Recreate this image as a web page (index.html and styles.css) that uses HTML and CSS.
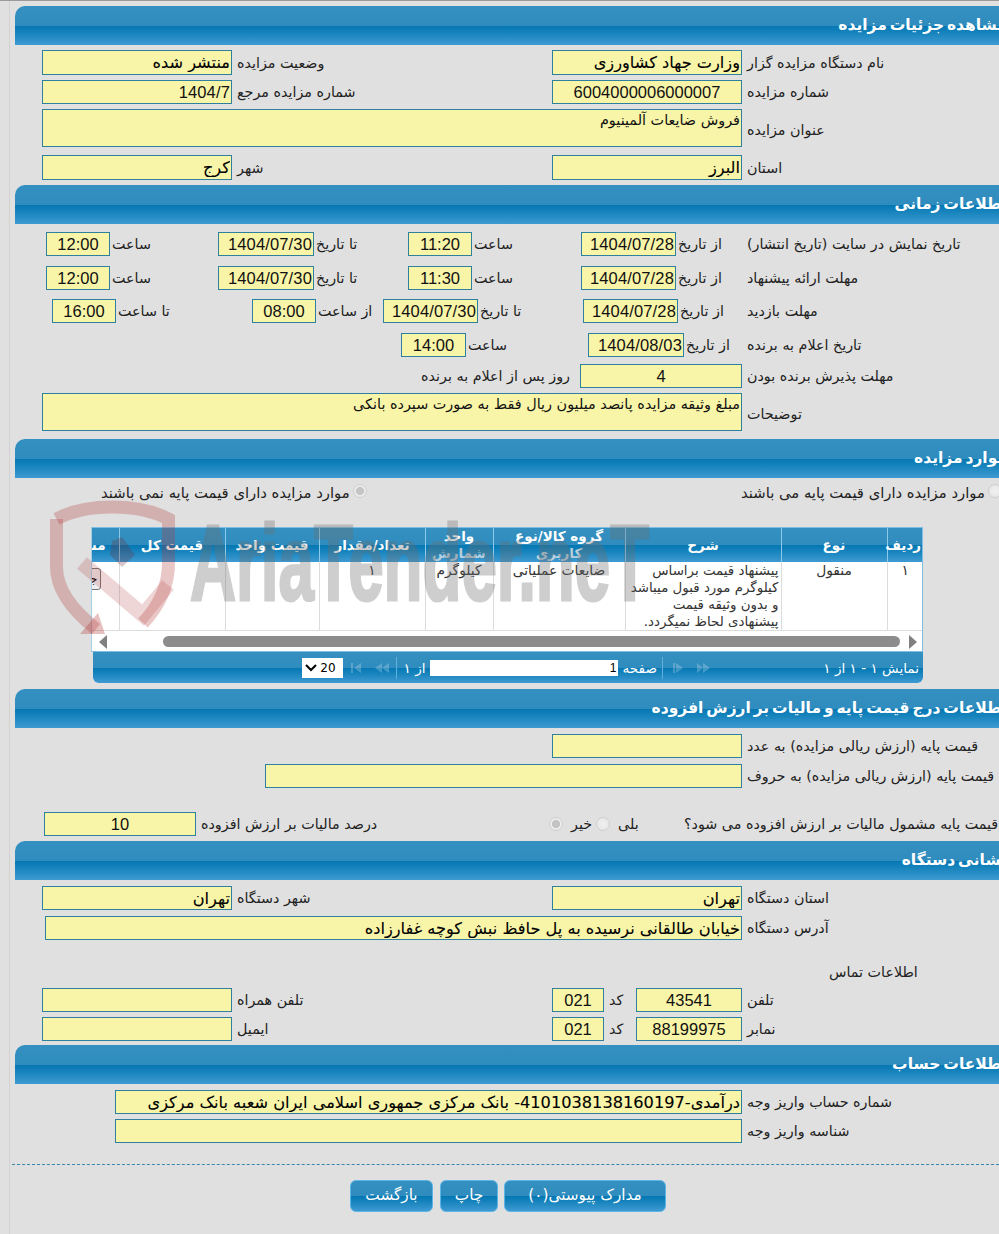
FILE: index.html
```html
<!DOCTYPE html>
<html lang="fa">
<head>
<meta charset="utf-8">
<title>مشاهده جزئیات مزایده</title>
<link rel="stylesheet" href="styles.css">
</head>
<body>
<div class="page">
  <h2 class="bar">مشاهده جزئیات مزایده</h2>
  <div class="row two mt5 h25"><input class="f strong" dir="rtl" readonly value="منتشر شده"><label>وضعیت مزایده</label><input class="f strong" dir="rtl" readonly value="وزارت جهاد کشاورزی"><label>نام دستگاه مزایده گزار</label></div>
  <div class="row two mt5"><input class="f num right" readonly value="1404/7"><label>شماره مزایده مرجع</label><input class="f num center" readonly value="6004000006000007"><label>شماره مزایده</label></div>
  <div class="row wide mt5 h38"><textarea class="f area" dir="rtl" readonly>فروش ضایعات آلمینیوم</textarea><label>عنوان مزایده</label></div>
  <div class="row two mt8 h25"><input class="f strong" dir="rtl" readonly value="کرج"><label>شهر</label><input class="f strong" dir="rtl" readonly value="البرز"><label>استان</label></div>

  <h2 class="bar mt5">اطلاعات زمانی</h2>
  <div class="row t1 mt8"><input class="f num center" readonly value="12:00"><label>ساعت</label><input class="f num right" readonly value="1404/07/30"><label>تا تاریخ</label><input class="f num center" readonly value="11:20"><label>ساعت</label><input class="f num right" readonly value="1404/07/28"><label>از تاریخ</label><label>تاریخ نمایش در سایت (تاریخ انتشار)</label></div>
  <div class="row t1 mt10"><input class="f num center" readonly value="12:00"><label>ساعت</label><input class="f num right" readonly value="1404/07/30"><label>تا تاریخ</label><input class="f num center" readonly value="11:30"><label>ساعت</label><input class="f num right" readonly value="1404/07/28"><label>از تاریخ</label><label>مهلت ارائه پیشنهاد</label></div>
  <div class="row t2 mt9"><input class="f num center" readonly value="16:00"><label>تا ساعت</label><input class="f num center" readonly value="08:00"><label>از ساعت</label><input class="f num right" readonly value="1404/07/30"><label>تا تاریخ</label><input class="f num right" readonly value="1404/07/28"><label>از تاریخ</label><label>مهلت بازدید</label></div>
  <div class="row t3 mt10"><input class="f num center" readonly value="14:00"><label>ساعت</label><input class="f num right" readonly value="1404/08/03"><label>از تاریخ</label><label>تاریخ اعلام به برنده</label></div>
  <div class="row t4 mt7"><label class="after">روز پس از اعلام به برنده</label><input class="f num center" readonly value="4"><label>مهلت پذیرش برنده بودن</label></div>
  <div class="row wide mt5 h38"><textarea class="f area" dir="rtl" readonly>مبلغ وثیقه مزایده پانصد میلیون ریال فقط به صورت سپرده بانکی</textarea><label>توضیحات</label></div>

  <h2 class="bar mt8">موارد مزایده</h2>
  <div class="row radios mt5 h20">
    <span class="opt">موارد مزایده دارای قیمت پایه نمی باشند<input class="radio on" type="radio" name="base" checked disabled></span>
    <span class="opt">موارد مزایده دارای قیمت پایه می باشند<input class="radio" type="radio" name="base" disabled></span>
  </div>

  <div class="grid">
    <table>
      <colgroup><col class="c1"><col class="c2"><col class="c3"><col class="c4"><col class="c5"><col class="c6"><col class="c7"><col class="c8"><col class="c9"></colgroup>
      <thead>
        <tr><th>ردیف</th><th>نوع</th><th>شرح</th><th>گروه کالا/نوع <span class="dim">کاربری</span></th><th>واحد <span class="dim">شمارش</span></th><th>تعداد/مقدار</th><th>قیمت واحد</th><th>قیمت کل</th><th class="cut">مشاهده</th></tr>
      </thead>
      <tbody>
        <tr><td>۱</td><td>منقول</td><td class="desc">پیشنهاد قیمت براساس<br>کیلوگرم مورد قبول میباشد<br>و بدون وثیقه قیمت<br>پیشنهادی لحاظ نمیگردد.</td><td>ضایعات عملیاتی</td><td>کیلوگرم</td><td>۱</td><td></td><td></td><td class="cut"><button class="mini" type="button">جزئیات</button></td></tr>
      </tbody>
    </table>
    <div class="hscroll">
      <svg class="arrow" width="8" height="14" viewBox="0 0 8 14"><path d="M8 0L0 7L8 14Z"/></svg>
      <div class="thumb"></div>
      <svg class="arrow" width="8" height="14" viewBox="0 0 8 14"><path d="M0 0L8 7L0 14Z"/></svg>
    </div>
  </div>
  <div class="pager">
    <span class="status">نمایش ۱ - ۱ از ۱</span>
    <svg class="nav" width="38" height="10" viewBox="0 0 38 10"><path d="M37 0V10H35V0ZM34 0V10L27 5ZM13 0V10L7 5ZM7 0V10L0 5Z" transform="matrix(-1 0 0 1 38 0)"/></svg>
    <i class="sep sep1"></i>
    <span class="lbl">صفحه</span>
    <input class="pageno" dir="rtl" readonly value="1">
    <span class="lbl">از ۱</span>
    <i class="sep sep2"></i>
    <svg class="nav" width="38" height="10" viewBox="0 0 38 10"><path d="M0 0V10H2V0ZM3 5L10 0V10ZM24 5L31 0V10ZM31 5L38 0V10Z"/></svg>
    <span class="select"><b>20</b><svg width="12" height="8" viewBox="0 0 12 8"><path d="M1 1L6 6L11 1" fill="none" stroke="#000" stroke-width="2"/></svg></span>
  </div>

  <h2 class="bar mt6">اطلاعات درج قیمت پایه و مالیات بر ارزش افزوده</h2>
  <div class="row one mt6"><input class="f" dir="rtl" readonly><label>قیمت پایه (ارزش ریالی مزایده) به عدد</label></div>
  <div class="row words mt6"><input class="f" dir="rtl" readonly><label>قیمت پایه (ارزش ریالی مزایده) به حروف</label></div>
  <div class="row tax mt24">
    <input class="f num center" readonly value="10"><label>درصد مالیات بر ارزش افزوده</label>
    <input class="radio on" type="radio" name="vat" checked disabled><label class="tiny">خیر</label>
    <input class="radio" type="radio" name="vat" disabled><label class="tiny">بلی</label>
    <label class="q">قیمت پایه مشمول مالیات بر ارزش افزوده می شود؟</label>
  </div>

  <h2 class="bar mt5">نشانی دستگاه</h2>
  <div class="row two mt6"><input class="f strong" dir="rtl" readonly value="تهران"><label>شهر دستگاه</label><input class="f strong" dir="rtl" readonly value="تهران"><label>استان دستگاه</label></div>
  <div class="row addr mt6"><input class="f strong" dir="rtl" readonly value="خیابان طالقانی نرسیده به پل حافظ نبش کوچه غفارزاده"><label>آدرس دستگاه</label></div>
  <div class="row contact mt22 h20"><label>اطلاعات تماس</label></div>
  <div class="row four mt6"><input class="f" dir="rtl" readonly><label>تلفن همراه</label><input class="f num center" readonly value="021"><label>کد</label><input class="f num center" readonly value="43541"><label>تلفن</label></div>
  <div class="row four mt5"><input class="f" dir="rtl" readonly><label>ایمیل</label><input class="f num center" readonly value="021"><label>کد</label><input class="f num center" readonly value="88199975"><label>نمابر</label></div>

  <h2 class="bar mt4">اطلاعات حساب</h2>
  <div class="row acct mt6"><input class="f strong" dir="rtl" readonly value="درآمدی-4101038138160197- بانک مرکزی جمهوری اسلامی ایران شعبه بانک مرکزی"><label>شماره حساب واریز وجه</label></div>
  <div class="row acct mt5"><input class="f" dir="rtl" readonly><label>شناسه واریز وجه</label></div>
  <div class="dash"></div>
  <div class="actions">
    <button class="btn back" type="button">بازگشت</button>
    <button class="btn print" type="button">چاپ</button>
    <button class="btn docs" type="button">مدارک پیوستی(۰)</button>
  </div>

  <div class="wm" aria-hidden="true">
    <svg class="shield" width="130" height="145" viewBox="0 0 130 145">
      <path d="M6.500 24C25 14 45 12 62 12C80 12 100 14 118.500 24V68C118.500 92 108 112 93 128" fill="none" stroke="#b03030" stroke-opacity=".27" stroke-width="13"/>
      <path d="M6.500 24V72C6.500 95 22 115 46 134" fill="none" stroke="#b03030" stroke-opacity=".27" stroke-width="13"/>
      <path d="M32 68L93 120L118 90" fill="none" stroke="#b03030" stroke-opacity=".2" stroke-width="15"/>
      <path d="M62 46L72 42L85 60L72 72L60 60Z" fill="#70303a" fill-opacity=".28"/>
      <path d="M30 139H55L48 118Z" fill="#b03030" fill-opacity=".3"/>
    </svg>
    <span class="wmtext">AriaTender.neT</span>
  </div>
</div>
</body>
</html>
```
FILE: styles.css
```css
html, body { margin: 0; padding: 0; }
html { overflow: hidden; }
body {
  width: 999px;
  height: 1234px;
  overflow: hidden;
  background: #e0e0e0;
  font-family: "DejaVu Sans", "Liberation Sans", sans-serif;
  font-size: 14.3px;
  color: #222;
}
.page {
  position: relative;
  width: 999px;
  height: 1234px;
  box-sizing: border-box;
  padding-top: 5px;
  border-top: 1px solid #9a9a9a;
  overflow: hidden;
}
.page::before {
  content: "";
  position: absolute;
  left: 9px;
  top: 0;
  bottom: 0;
  width: 1px;
  background: #d2d2d2;
}
.bar {
  margin: 0 -8px 0 15px;
  height: 39px;
  box-sizing: border-box;
  padding: 11px 0 0 0;
  border-top-left-radius: 10px;
  background: linear-gradient(to bottom, #3490c0 0, #2f8cbe 50%, #0577b3 51%, #1884bd 70%, #3f9ad2 100%);
  color: #fff;
  font-size: 15.5px;
  word-spacing: -2.5px;
  line-height: 17px;
  font-weight: bold;
  direction: rtl;
  text-align: right;
}
.mt4 { margin-top: 4px; } .mt5 { margin-top: 5px; } .mt6 { margin-top: 6px; }
.mt7 { margin-top: 7px; } .mt8 { margin-top: 8px; } .mt9 { margin-top: 9px; }
.mt10 { margin-top: 10px; } .mt22 { margin-top: 22px; } .mt24 { margin-top: 24px; }

.row {
  display: grid;
  height: 24px;
  align-items: center;
  direction: ltr;
}
.h25 { height: 25px; } .h38 { height: 38px; } .h20 { height: 20px; }
.row > label {
  direction: rtl;
  text-align: left;
  white-space: nowrap;
  padding-left: 5px;
  line-height: 20px;
}
.f {
  box-sizing: border-box;
  width: 100%;
  height: 100%;
  margin: 0;
  padding: 0 1px;
  border: 1px solid #2f7f9e;
  border-radius: 0;
  outline: none;
  background: #f8f5a8;
  color: #111;
  font-family: "DejaVu Sans", sans-serif;
  font-size: 14.4px;
  resize: none;
  overflow: hidden;
}
.strong { font-size: 16.2px; color: #000; -webkit-text-stroke: .1px #000; }
.num { font-family: "Liberation Sans", sans-serif; font-size: 16.5px; }
.center { text-align: center; }
.right { text-align: right; letter-spacing: .15px; }
.area { line-height: 18px; padding-top: 1px; }

.two { padding-left: 42px; grid-template-columns: 190px 320px 190px 1fr; }
.wide { padding-left: 42px; grid-template-columns: 700px 1fr; }
.wide > label { padding-top: 4px; }
.one { padding-left: 552px; grid-template-columns: 190px 1fr; }
.words { padding-left: 265px; grid-template-columns: 477px 1fr; }
.addr { padding-left: 45px; grid-template-columns: 697px 1fr; }
.acct { padding-left: 115px; grid-template-columns: 627px 1fr; }
.four { padding-left: 42px; grid-template-columns: 190px 320px 52px 32px 106px 1fr; }
.t1 { padding-left: 46px; grid-template-columns: 64px 108px 96px 94px 64px 109px 95px 71px 1fr; }
.t2 { padding-left: 52px; grid-template-columns: 64px 136px 64px 67px 95px 105px 95px 69px 1fr; }
.t3 { padding-left: 401px; grid-template-columns: 65px 122px 96px 63px 1fr; }
.t4 { padding-left: 300px; grid-template-columns: 280px 162px 1fr; }
.t4 > .after { text-align: right; padding: 0 10px 0 0; }
.t1 > label, .t2 > label, .t3 > label { padding-left: 2px; }
.t1 > label:last-child, .t2 > label:last-child, .t3 > label:last-child { padding-left: 0; }

.radios { grid-template-columns: 370px 1fr; padding-left: 0; align-items: start; font-size: 14.8px; }
.opt {
  display: flex;
  align-items: center;
  gap: 3px;
  direction: ltr;
  white-space: nowrap;
  justify-content: flex-start;
  line-height: 20px;
}
.opt:first-child { padding-left: 101px; }
.opt:last-child { padding-left: 371px; }
.radio {
  appearance: none;
  -webkit-appearance: none;
  flex: none;
  width: 14px;
  height: 14px;
  margin: 0;
  border-radius: 50%;
  border: 1px solid #cfcfcf;
  background: radial-gradient(circle, #f0f0f0 0, #e4e4e4 100%);
}
.radio.on { background: radial-gradient(circle, #c4c4c4 0, #c4c4c4 45%, #eaeaea 50%, #eaeaea 100%); }
.opt .radio { margin-top: -4px; }

.grid {
  margin: 24px 0 0 91px;
  width: 832px;
  height: 125px;
  box-sizing: border-box;
  background: #fff;
  border: 1px solid #7fbde2;
  border-left-color: #a9cfe6;
  overflow: hidden;
}
table {
  width: 831px;
  table-layout: fixed;
  border-collapse: collapse;
  direction: rtl;
}
.c1 { width: 36px; } .c2 { width: 106px; } .c3 { width: 156px; } .c4 { width: 132px; }
.c5 { width: 68px; } .c6 { width: 106px; } .c7 { width: 94px; } .c8 { width: 106px; } .c9 { width: 27px; }
th {
  height: 33px;
  padding: 0 2px;
  background: linear-gradient(to bottom, #3490c0 0, #2f8cbe 50%, #0577b3 51%, #1884bd 70%, #3f9ad2 100%);
  color: #fff;
  font-size: 13.5px;
  line-height: 17px;
  font-weight: bold;
  border-left: 1px solid #8ccaea;
  text-align: center;
}
.dim { color: #b9cfdc; display: block; }
td {
  height: 68px;
  padding: 0 4px;
  vertical-align: top;
  text-align: center;
  font-size: 13.8px;
  line-height: 17px;
  color: #333;
  border-left: 1px solid #dcdcdc;
  border-bottom: 1px solid #dcdcdc;
  box-sizing: border-box;
}
td.desc { text-align: right; padding: 0 2px 0 0; white-space: nowrap; font-size: 13.4px; }
.cut { white-space: nowrap; overflow: hidden; text-align: right; padding-right: 0; border-left: none; }
th.cut { padding-right: 13px; }
td.cut { padding-right: 18px; padding-top: 6px; }
.mini {
  width: 50px;
  height: 22px;
  padding: 0 2px;
  margin: 0;
  font: 12px "DejaVu Sans", sans-serif;
  background: #efefef;
  border: 1px solid #767676;
  border-radius: 3px;
  text-align: right;
}
.hscroll {
  display: flex;
  align-items: center;
  height: 21px;
  padding: 0 7px;
  direction: ltr;
}
.arrow { flex: none; fill: #808080; }
.thumb { flex: none; width: 737px; height: 11px; border-radius: 6px; background: #8c8c8c; margin: 0 9px 0 56px; }

.pager {
  display: flex;
  align-items: center;
  direction: rtl;
  margin-left: 93px;
  width: 830px;
  height: 31px;
  box-sizing: border-box;
  padding-right: 4px;
  border-radius: 0 0 6px 6px;
  background: linear-gradient(to bottom, #3490c0 0, #2f8cbe 50%, #0577b3 51%, #1884bd 70%, #3f9ad2 100%);
  color: #fff;
  font-size: 13.6px;
  white-space: nowrap;
}
.status { width: 209px; flex: none; }
.nav { flex: none; fill: #fff; opacity: .22; }
.pager .sep { flex: none; width: 1px; height: 22px; background: #5fb0dc; }
.pager .sep1 { margin: 0 9px 0 5px; }
.pager .sep2 { margin: 0 7px; }
.lbl { flex: none; }
.pageno {
  flex: none;
  width: 188px;
  height: 16px;
  box-sizing: border-box;
  padding: 0 1px;
  margin: 0 5px 0 4px;
  border: none;
  background: #fff;
  font: 12px "Liberation Sans", sans-serif;
  color: #000;
}
.select {
  flex: none;
  display: flex;
  align-items: center;
  justify-content: space-between;
  direction: rtl;
  box-sizing: border-box;
  width: 41px;
  height: 20px;
  margin-right: 8px;
  padding: 0 7px 0 3px;
  background: #fff;
}
.select b { font: 12px "DejaVu Sans", sans-serif; color: #000; }

.tax { padding-left: 44px; grid-template-columns: 152px 353px 14px 33px 14px 74px 1fr; }
.tax > label.tiny { padding-left: 8px; }
.tax > label.q { padding-left: 0; overflow: visible; }
.contact { padding-left: 829px; grid-template-columns: 1fr; }
.contact > label { padding-left: 0; }

.dash { margin: 21px 0 0 12px; border-top: 1px dashed #3a87ad; }
.actions {
  display: flex;
  gap: 7px;
  direction: ltr;
  padding-left: 350px;
  margin-top: 15px;
}
.btn {
  height: 32px;
  box-sizing: border-box;
  margin: 0;
  padding: 0 0 2px;
  border: 1px solid #5cb3e6;
  border-radius: 6px;
  background: linear-gradient(to bottom, #3490c0 0, #2f8cbe 50%, #0577b3 51%, #1884bd 70%, #3f9ad2 100%);
  color: #fff;
  font: 15.3px "DejaVu Sans", sans-serif;
}
.back { width: 83px; }
.print { width: 58px; }
.docs { width: 162px; margin-left: -1px; }

.wm { position: absolute; left: 50px; top: 494px; width: 620px; height: 150px; pointer-events: none; }
.shield { position: absolute; left: 0; top: 0; }
.wmtext {
  position: absolute;
  left: 140px;
  top: 8px;
  font: bold 108px/120px "Liberation Sans", sans-serif;
  color: #6e6e6e;
  opacity: .33;
  -webkit-text-stroke: 3px #6e6e6e;
  transform: scaleX(.59);
  transform-origin: left top;
  white-space: nowrap;
}
```
